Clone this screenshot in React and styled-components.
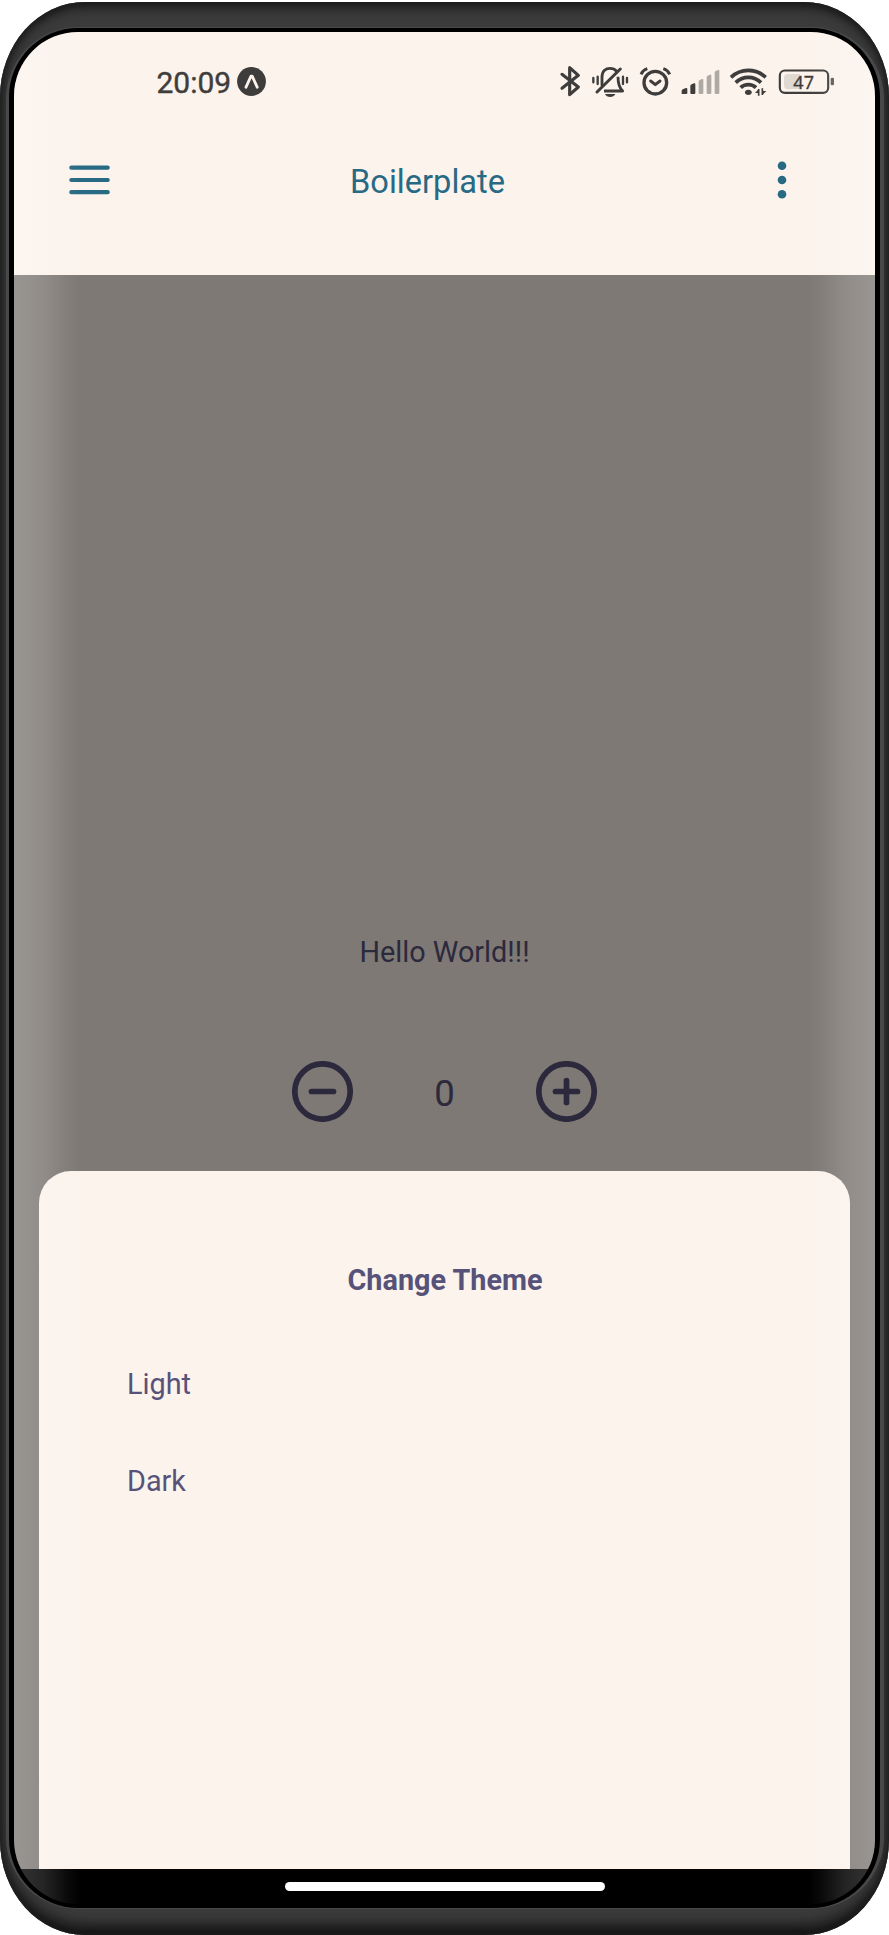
import React from "react";
import styled, { createGlobalStyle } from "styled-components";

const GlobalStyle = createGlobalStyle`
  * { box-sizing: border-box; }
  body { margin: 0; background: #fff; font-family: Roboto, "Liberation Sans", sans-serif; }
`;

const Stage = styled.div`
  width: 889px;
  height: 1935px;
  padding-top: 2px;
  overflow: hidden;
`;

const Device = styled.div`
  width: 889px;
  height: 1933px;
  padding: 25px 5px 26px 6px;
  border-radius: 85px / 95px;
  background: #3b3b3b;
  box-shadow: inset 0 0 4px #222, inset 0 7px 12px -2px #141414, inset 0 -12px 14px -2px #141414;
`;

const Rim = styled.div`
  height: 100%;
  padding: 1px 4px 1px 3px;
  border-radius: 72px;
  background: #484848;
`;

const Bezel = styled.div`
  height: 100%;
  padding: 4px 5px 0;
  border-radius: 69px;
  background: #000;
`;

const Screen = styled.div`
  position: relative;
  height: 1872px;
  display: flex;
  flex-direction: column;
  overflow: hidden;
  border-radius: 64px;
  background: #000;
`;

const Glare = styled.div`
  position: absolute;
  top: 0;
  bottom: 0;
  ${(p) => p.$side}: 0;
  width: 67px;
  pointer-events: none;
  background: linear-gradient(
    to ${(p) => (p.$side === "left" ? "right" : "left")},
    rgba(255, 255, 255, 0.21),
    rgba(255, 255, 255, 0.14) 45%,
    rgba(255, 255, 255, 0.04) 80%,
    rgba(255, 255, 255, 0)
  );
`;

const StatusBar = styled.div`
  height: 98px;
  flex: none;
  display: flex;
  align-items: center;
  padding: 1px 39px 0 142.5px;
  background: #fbf3ec;
  color: #3f3d3b;
`;

const Clock = styled.div`
  width: 80.5px;
  padding-top: 2px;
  font-size: 30px;
  line-height: 34px;
  font-weight: 400;
  -webkit-text-stroke: 0.4px currentColor;
`;

const StatusIcons = styled.div`
  display: flex;
  margin-left: auto;
`;

const AppBar = styled.header`
  height: 145px;
  flex: none;
  display: flex;
  align-items: flex-start;
  padding: 28px 56px 0 55px;
  background: #fbf3ec;
  color: #286983;
`;

const IconButton = styled.button`
  width: ${(p) => p.$width}px;
  height: 44px;
  padding: 0;
  border: 0;
  display: flex;
  align-items: center;
  justify-content: center;
  background: none;
  color: inherit;
`;

const AppTitle = styled.h1`
  flex: 1;
  margin: 0;
  padding-top: 2px;
  text-align: center;
  font-size: 32.6px;
  font-weight: 400;
  line-height: 44px;
`;

const Main = styled.main`
  position: relative;
  height: 1594px;
  flex: none;
  display: flex;
  flex-direction: column;
  align-items: center;
  padding-top: 657px;
  background: #7e7975;
  color: #2c293d;
`;

const Greeting = styled.p`
  margin: 0;
  font-size: 28.8px;
  line-height: 40px;
`;

const Counter = styled.div`
  display: flex;
  align-items: center;
  justify-content: space-between;
  width: 305px;
  margin-top: 89px;
`;

const Count = styled.span`
  padding-top: 5px;
  font-size: 36.5px;
  line-height: 44px;
`;

const Sheet = styled.section`
  position: absolute;
  left: 25px;
  right: 25px;
  bottom: 0;
  height: 698px;
  padding: 89px 88px 0;
  border-radius: 32px 32px 0 0;
  background: #fbf3ec;
  color: #575279;
`;

const SheetTitle = styled.h2`
  margin: 0 0 64px;
  padding-left: 1px;
  text-align: center;
  font-size: 28.8px;
  font-weight: 700;
  line-height: 40px;
`;

const ThemeOption = styled.div`
  height: 96.5px;
  font-size: 28.8px;
  line-height: 40px;
`;

const NavBar = styled.div`
  flex: 1;
  display: flex;
  justify-content: center;
  padding-top: 13px;
  background: #000;
`;

const HomeHandle = styled.div`
  width: 320px;
  height: 9px;
  border-radius: 4.5px;
  background: #fff;
`;

const StatusGlyph = ({ x, width, children }) => (
  <svg
    width={width / 3}
    height="33"
    viewBox={`${x} 45 ${width} 99`}
    fill="none"
    stroke="currentColor"
    strokeLinecap="round"
    strokeLinejoin="round"
  >
    {children}
  </svg>
);

const RoundIcon = ({ plus }) => (
  <svg width="61" height="61" viewBox="0 0 61 61" fill="none" stroke="currentColor" strokeWidth="5.7" strokeLinecap="round">
    <circle cx="30.5" cy="30.5" r="27.7" />
    <path d="M19.5 30.5h22" />
    {plus && <path d="M30.5 19.5v22" />}
  </svg>
);

export default function App() {
  return (
    <Stage>
      <GlobalStyle />
      <Device>
        <Rim>
          <Bezel>
            <Screen>
              <StatusBar>
                <Clock>20:09</Clock>
                <svg width="29" height="29" viewBox="0 0 29 29">
                  <circle cx="14.5" cy="14.5" r="14.4" fill="#3f3d3b" />
                  <path d="M9 20.2l5-11h1.2l5 11" fill="none" stroke="#fbf3ec" strokeWidth="2.8" strokeLinecap="round" strokeLinejoin="round" />
                </svg>
                <StatusIcons>
                  <StatusGlyph x={54} width={84}>
                    <path d="M66 73L115 111L89 134V53L115 76L66 115" strokeWidth="9.5" />
                  </StatusGlyph>
                  <StatusGlyph x={138} width={144}>
                    <path d="M186 106V82C186 62 198 55 210 55C219 55 225 58 229 63" strokeWidth="8.5" />
                    <path d="M234 80C234 101 237 112 248 123H192" strokeWidth="8.5" strokeLinecap="butt" />
                    <path d="M171 126L241 57" strokeWidth="9" />
                    <path d="M195 132H226C222 144 199 144 195 132Z" fill="currentColor" stroke="none" />
                    <path d="M160 84V97M173 80V102M249 80V102M261 84V97" strokeWidth="7" />
                  </StatusGlyph>
                  <StatusGlyph x={282} width={126}>
                    <circle cx="346" cy="98" r="34" strokeWidth="10" />
                    <path d="M332 93L346 104L360 93" strokeWidth="9" />
                    <path d="M303 73C307 64 313 59 322 56M389 73C385 64 379 59 370 56" strokeWidth="9" strokeLinecap="butt" />
                  </StatusGlyph>
                  <StatusGlyph x={408} width={147}>
                    <g fill="currentColor" stroke="none">
                      <path d="M425 132V123Q425 120 428 118L438 114Q442 113 442 117V129Q442 132 439 132Z" />
                      <path d="M451 129V108Q451 105 455 103L462 100Q466 99 466 103V129Q466 132 463 132H454Q451 132 451 129Z" />
                      <g opacity="0.4">
                        <path d="M476 129V95Q476 92 479 90L486 87Q490 86 490 90V129Q490 132 487 132H479Q476 132 476 129Z" />
                        <path d="M500 129V82Q500 79 503 77L510 74Q514 73 514 77V129Q514 132 511 132H503Q500 132 500 129Z" />
                        <path d="M524 129V68Q524 65 527 63L534 60Q538 59 538 63V129Q538 132 535 132H527Q524 132 524 129Z" />
                      </g>
                    </g>
                  </StatusGlyph>
                  <StatusGlyph x={555} width={144}>
                    <g strokeLinecap="butt" strokeWidth="11">
                      <path d="M573 82C602 54 648 54 677 82" />
                      <path d="M587 98C608 77 642 77 663 98" />
                      <path d="M602 113C614 101 636 101 648 113" />
                    </g>
                    <ellipse cx="625" cy="127" rx="10" ry="8" fill="currentColor" stroke="none" />
                    <path d="M656 117V137M667 115V135" strokeWidth="5" strokeLinecap="butt" />
                    <path d="M656 117L645 129H656ZM667 135L679 123H667Z" fill="currentColor" stroke="none" />
                  </StatusGlyph>
                  <StatusGlyph x={699} width={189}>
                    <rect x="719.5" y="61.5" width="145" height="67" rx="15" strokeWidth="6.5" />
                    <path d="M743 72H780V117H743Q732 117 732 106V83Q732 72 743 72Z" fill="#3f3d3b" fillOpacity="0.14" stroke="none" />
                    <rect x="872" y="83" width="10" height="23" rx="4" fill="#5b5856" stroke="none" />
                    <text x="791" y="115.5" textAnchor="middle" fontFamily='"Noto Sans", sans-serif' fontSize="54" fill="currentColor" stroke="currentColor" strokeWidth="1">47</text>
                  </StatusGlyph>
                </StatusIcons>
              </StatusBar>
              <AppBar>
                <IconButton $width={41} aria-label="Menu">
                  <svg width="41" height="30" viewBox="0 0 41 30" stroke="currentColor" strokeWidth="4.2" strokeLinecap="round">
                    <path d="M2.3 2.7h36.4M2.3 15h36.4M2.3 27.2h36.4" />
                  </svg>
                </IconButton>
                <AppTitle>Boilerplate</AppTitle>
                <IconButton $width={74} aria-label="More">
                  <svg width="10" height="38" viewBox="0 0 10 38" fill="currentColor">
                    <circle cx="5" cy="4.8" r="4.3" />
                    <circle cx="5" cy="19" r="4.3" />
                    <circle cx="5" cy="33.2" r="4.3" />
                  </svg>
                </IconButton>
              </AppBar>
              <Main>
                <Greeting>Hello World!!!</Greeting>
                <Counter>
                  <RoundIcon />
                  <Count>0</Count>
                  <RoundIcon plus />
                </Counter>
                <Sheet>
                  <SheetTitle>Change Theme</SheetTitle>
                  <ThemeOption>Light</ThemeOption>
                  <ThemeOption>Dark</ThemeOption>
                </Sheet>
              </Main>
              <NavBar>
                <HomeHandle />
              </NavBar>
              <Glare $side="left" />
              <Glare $side="right" />
            </Screen>
          </Bezel>
        </Rim>
      </Device>
    </Stage>
  );
}
